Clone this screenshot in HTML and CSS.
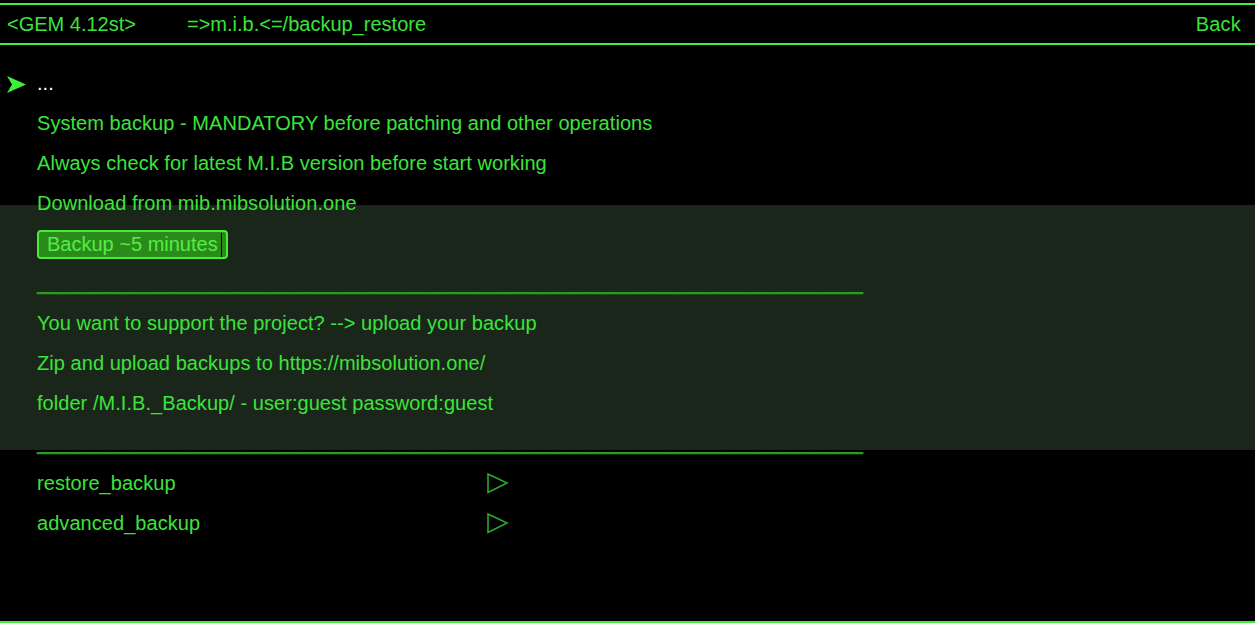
FILE: index.html
```html
<!DOCTYPE html>
<html lang="en">
<head>
    <meta charset="UTF-8">
    <meta name="viewport" content="width=device-width, initial-scale=1.0">
    <title>backup_restore</title>
    <link rel="stylesheet" href="styles.css">
</head>
<body>
    <div class="screen">
        <div class="top-bar">
            <span class="version">&lt;GEM 4.12st&gt;</span>
            <span class="path">=&gt;m.i.b.&lt;=/backup_restore</span>
            <span class="back">Back</span>
        </div>

        <div class="menu-list">
            <div class="row">
                <span class="cursor">
                    <svg width="20" height="17" viewBox="0 0 20 17"><polygon points="0,0 19,8.5 0,17 5,8.5" fill="#3cf03c"/></svg>
                </span>
                <span class="label dots">...</span>
            </div>
            <div class="row"><span></span><span class="label">System backup - MANDATORY before patching and other operations</span></div>
            <div class="row"><span></span><span class="label">Always check for latest M.I.B version before start working</span></div>
            <div class="row"><span></span><span class="label">Download from mib.mibsolution.one</span></div>
            <div class="row">
                <span></span>
                <span class="label"><button class="action-button">Backup ~5 minutes<i class="caret"></i></button></span>
            </div>
            <div class="row"><span></span><span class="label separator">__________________________________________________________________________</span></div>
            <div class="row"><span></span><span class="label">You want to support the project? --&gt; upload your backup</span></div>
            <div class="row"><span></span><span class="label">Zip and upload backups to https://mibsolution.one/</span></div>
            <div class="row"><span></span><span class="label">folder /M.I.B._Backup/ - user:guest password:guest</span></div>
            <div class="row"><span></span><span class="label separator">__________________________________________________________________________</span></div>
            <div class="row">
                <span></span>
                <span class="label">restore_backup</span>
                <span class="arrow">
                    <svg width="22" height="21" viewBox="0 0 22 21"><polygon points="1,1 20,10 1,19.5" fill="none" stroke="#2ca82c" stroke-width="1.6"/></svg>
                </span>
            </div>
            <div class="row">
                <span></span>
                <span class="label">advanced_backup</span>
                <span class="arrow">
                    <svg width="22" height="21" viewBox="0 0 22 21"><polygon points="1,1 20,10 1,19.5" fill="none" stroke="#2ca82c" stroke-width="1.6"/></svg>
                </span>
            </div>
        </div>
    </div>
</body>
</html>
```

FILE: styles.css
```css
/* terminal style screen */
html, body {
    margin: 0;
    padding: 0;
    background-color: #000000;
}

body {
    font-family: "Liberation Sans", Arial, sans-serif;
    font-size: 20px;
    color: #3ce33c;
}

.screen {
    box-sizing: border-box;
    height: 623px;
    padding-top: 3px;
    border-bottom: 2px solid #3cf03c;
    overflow: hidden;
}

.top-bar {
    display: flex;
    align-items: center;
    height: 38px;
    padding: 0 14px 0 7px;
    border-top: 2px solid #3cf03c;
    border-bottom: 2px solid #3cf03c;
    line-height: 38px;
}

.version {
    width: 180px;
}

.path {
    flex: 1;
}

.back {
    letter-spacing: 0.2px;
}

.menu-list {
    padding-top: 18px;
    /* zona resaltada */
    background: linear-gradient(to bottom,
        transparent 160px,
        #1a2619 160px,
        #1a2619 405px,
        transparent 405px);
}

.row {
    display: grid;
    grid-template-columns: 37px 450px auto;
    height: 40px;
    line-height: 40px;
    white-space: nowrap;
}

.label {
    letter-spacing: 0.05px;
}

.cursor {
    display: flex;
    align-items: center;
    padding-left: 7px;
    padding-top: 2px;
}

.dots {
    color: #ffffff;
}

.separator {
    color: #2b9c22;
    letter-spacing: 0.04px;
    text-shadow: 0 -1px 0 #2b9c22; /* linea mas gruesa */
}

.arrow {
    display: flex;
    align-items: center;
}

.action-button {
    position: relative;
    box-sizing: border-box;
    height: 29px;
    width: 191px;
    margin-top: 7px;
    padding: 0 0 0 8px;
    background-color: #2a8a1c;
    border: 2px solid #44ee33;
    border-radius: 4px;
    color: #55ee44;
    font-family: inherit;
    font-size: 20px;
    line-height: 25px;
    text-align: left;
    vertical-align: top;
}

.caret {
    position: absolute;
    top: 1px;
    left: 182px;
    width: 1px;
    height: 24px;
    background-color: #000000;
}
```
